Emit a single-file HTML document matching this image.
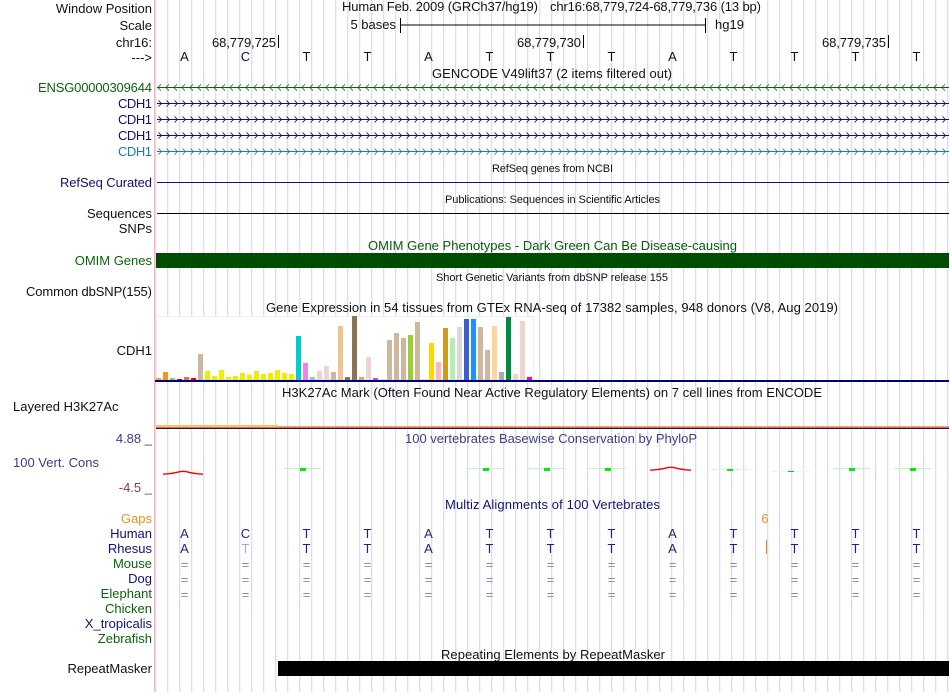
<!DOCTYPE html>
<html><head><meta charset="utf-8"><style>
html,body{margin:0;padding:0;background:#fff;width:950px;height:692px;overflow:hidden}
svg{display:block;font-family:"Liberation Sans",sans-serif;font-size:13px}
.r{text-anchor:end}.m{text-anchor:middle}
.n{fill:#10107a}.g{fill:#0a640a}.k{fill:#111}
.s{font-size:11px}
</style></head><body>
<svg width="950" height="692" viewBox="0 0 950 692" xmlns="http://www.w3.org/2000/svg">
<defs>
<pattern id="gl" x="167" y="0" width="12" height="10" patternUnits="userSpaceOnUse"><rect x="0" width="1" height="10" fill="#dcdcf4"/><rect x="1" width="1" height="10" fill="#f4f4fc"/></pattern>
<pattern id="la" x="157" y="84" width="8" height="7" patternUnits="userSpaceOnUse"><path d="M4 0.300L0.600 3.500L4 6.700" fill="none" stroke="#2a7a2a" stroke-width="0.900"/></pattern>
<pattern id="ra" x="158" y="100" width="8" height="16" patternUnits="userSpaceOnUse"><path d="M0.500 0.500L3.500 3.500L0.500 6.500" fill="none" stroke="#2a2a8a" stroke-width="0.900"/></pattern>
<pattern id="rb" x="158" y="148" width="8" height="7" patternUnits="userSpaceOnUse"><path d="M0.500 0.500L3.500 3.500L0.500 6.500" fill="none" stroke="#3a88c0" stroke-width="0.900"/></pattern>
</defs>
<rect width="950" height="692" fill="#fff"/>
<rect x="155" y="0" width="795" height="692" fill="url(#gl)"/>
<rect x="154" y="0" width="1" height="692" fill="#ffb0b0"/>

<!-- ruler -->
<text x="152" y="13" class="r k">Window Position</text>
<text x="152" y="30" class="r k">Scale</text>
<text x="152" y="47" class="r k">chr16:</text>
<text x="152" y="62" class="r k">---&gt;</text>
<text x="342" y="11" class="k" textLength="196">Human Feb. 2009 (GRCh37/hg19)</text>
<text x="550" y="11" class="k" textLength="211">chr16:68,779,724-68,779,736 (13 bp)</text>
<text x="396" y="29" class="r k">5 bases</text>
<text x="715" y="29" class="k">hg19</text>
<path d="M400.500 18V33M400 25H706M705.500 18V33" stroke="#000" fill="none"/>
<text x="212" y="47" class="k" textLength="64">68,779,725</text><rect x="278" y="35" width="1" height="13" fill="#000"/>
<text x="517" y="47" class="k" textLength="64">68,779,730</text><rect x="583" y="35" width="1" height="13" fill="#000"/>
<text x="822" y="47" class="k" textLength="64">68,779,735</text><rect x="888" y="35" width="1" height="13" fill="#000"/>
<g class="m k">
<text x="184.500" y="61">A</text><text x="245.500" y="61">C</text><text x="306.500" y="61">T</text><text x="367.500" y="61">T</text><text x="428.500" y="61">A</text><text x="489.500" y="61">T</text><text x="550.500" y="61">T</text><text x="611.500" y="61">T</text><text x="672.500" y="61">A</text><text x="733.500" y="61">T</text><text x="794.500" y="61">T</text><text x="855.500" y="61">T</text><text x="916.500" y="61">T</text>
</g>

<!-- genes -->
<text x="432" y="78" class="k" textLength="240">GENCODE V49lift37 (2 items filtered out)</text>
<text x="38" y="92" class="g" textLength="114">ENSG00000309644</text>
<text x="118" y="108" class="n" textLength="34">CDH1</text>
<text x="118" y="124" class="n" textLength="34">CDH1</text>
<text x="118" y="140" class="n" textLength="34">CDH1</text>
<text x="118" y="156" fill="#1f78b4" textLength="34">CDH1</text>
<rect x="157" y="84" width="792" height="7" fill="url(#la)"/>
<rect x="157" y="87" width="792" height="1" fill="#0a640a"/>
<rect x="157" y="100" width="792" height="7" fill="url(#ra)"/>
<rect x="157" y="116" width="792" height="7" fill="url(#ra)"/>
<rect x="157" y="132" width="792" height="7" fill="url(#ra)"/>
<rect x="157" y="148" width="792" height="7" fill="url(#rb)"/>
<rect x="157" y="103" width="792" height="1" fill="#10107a"/>
<rect x="157" y="119" width="792" height="1" fill="#10107a"/>
<rect x="157" y="135" width="792" height="1" fill="#10107a"/>
<rect x="157" y="151" width="792" height="1" fill="#1f78b4"/>

<!-- refseq etc -->
<text x="492" y="172" class="k s" textLength="121">RefSeq genes from NCBI</text>
<text x="60" y="187" class="n" textLength="92">RefSeq Curated</text>
<rect x="157" y="182" width="792" height="1" fill="#10107a"/>
<text x="445" y="203" class="k s" textLength="215">Publications: Sequences in Scientific Articles</text>
<text x="152" y="218" class="r k">Sequences</text>
<rect x="157" y="213" width="792" height="1" fill="#000"/>
<text x="152" y="233" class="r k">SNPs</text>
<text x="368" y="250" fill="#0a5a0a" textLength="369">OMIM Gene Phenotypes - Dark Green Can Be Disease-causing</text>
<text x="152" y="265" class="r g">OMIM Genes</text>
<rect x="156" y="253" width="793" height="15" fill="#004d00"/>
<text x="436" y="281" class="k s" textLength="232">Short Genetic Variants from dbSNP release 155</text>
<text x="26" y="296" class="k" textLength="126">Common dbSNP(155)</text>

<!-- GTEx -->
<text x="266" y="312" class="k" textLength="572">Gene Expression in 54 tissues from GTEx RNA-seq of 17382 samples, 948 donors (V8, Aug 2019)</text>
<text x="152" y="355" class="r k">CDH1</text>
<rect x="156.500" y="316.500" width="377" height="64" fill="#fff" stroke="#eeeeee"/>
<rect x="156" y="379" width="378" height="1" fill="#e4e4e4"/>
<g>
<rect x="156" y="378" width="5" height="2" fill="#ff9955"/>
<rect x="163" y="372" width="5" height="8" fill="#f29a0e"/>
<rect x="170" y="378" width="5" height="2" fill="#8fbc8f"/>
<rect x="177" y="379" width="5" height="1" fill="#8b1a6b"/>
<rect x="184" y="377" width="5" height="3" fill="#ee6a50"/>
<rect x="191" y="378" width="5" height="2" fill="#ff0000"/>
<rect x="198" y="354" width="5" height="26" fill="#cdb79e"/>
<rect x="205" y="371" width="5" height="9" fill="#eeee00"/>
<rect x="212" y="376" width="5" height="4" fill="#eeee00"/>
<rect x="219" y="370" width="5" height="10" fill="#eeee00"/>
<rect x="226" y="377" width="5" height="3" fill="#eeee00"/>
<rect x="233" y="376" width="5" height="4" fill="#eeee00"/>
<rect x="240" y="373" width="5" height="7" fill="#eeee00"/>
<rect x="247" y="375" width="5" height="5" fill="#eeee00"/>
<rect x="254" y="371" width="5" height="9" fill="#eeee00"/>
<rect x="261" y="374" width="5" height="6" fill="#eeee00"/>
<rect x="268" y="373" width="5" height="7" fill="#eeee00"/>
<rect x="275" y="370" width="5" height="10" fill="#eeee00"/>
<rect x="282" y="373" width="5" height="7" fill="#eeee00"/>
<rect x="289" y="374" width="5" height="6" fill="#eeee00"/>
<rect x="296" y="336" width="5" height="44" fill="#00cdcd"/>
<rect x="303" y="363" width="5" height="17" fill="#ee82ee"/>
<rect x="310" y="377" width="5" height="3" fill="#9ac0cd"/>
<rect x="317" y="371" width="5" height="9" fill="#eed5d2"/>
<rect x="324" y="366" width="5" height="14" fill="#eed5d2"/>
<rect x="331" y="372" width="5" height="8" fill="#cdb79e"/>
<rect x="338" y="326" width="5" height="54" fill="#eec591"/>
<rect x="345" y="377" width="5" height="3" fill="#8b7355"/>
<rect x="352" y="316" width="5" height="64" fill="#8b7355"/>
<rect x="359" y="377" width="5" height="3" fill="#cdaa7d"/>
<rect x="366" y="357" width="5" height="23" fill="#eed5d2"/>
<rect x="373" y="378" width="5" height="2" fill="#ba55d3"/>
<rect x="387" y="340" width="5" height="40" fill="#cdb79e"/>
<rect x="394" y="333" width="5" height="47" fill="#cdb79e"/>
<rect x="401" y="338" width="5" height="42" fill="#cdb79e"/>
<rect x="408" y="335" width="5" height="45" fill="#9acd32"/>
<rect x="415" y="322" width="5" height="58" fill="#cdb79e"/>
<rect x="429" y="343" width="5" height="37" fill="#ffd700"/>
<rect x="436" y="362" width="5" height="18" fill="#ffb6c1"/>
<rect x="443" y="328" width="5" height="52" fill="#cd9b1d"/>
<rect x="450" y="338" width="5" height="42" fill="#b4eeb4"/>
<rect x="457" y="327" width="5" height="53" fill="#d9d9d9"/>
<rect x="464" y="319" width="5" height="61" fill="#3a5fcd"/>
<rect x="471" y="319" width="5" height="61" fill="#1e90ff"/>
<rect x="478" y="327" width="5" height="53" fill="#cdb79e"/>
<rect x="485" y="350" width="5" height="30" fill="#cdb79e"/>
<rect x="492" y="326" width="5" height="54" fill="#ffd39b"/>
<rect x="499" y="372" width="5" height="8" fill="#aaaaaa"/>
<rect x="506" y="317" width="5" height="63" fill="#008b45"/>
<rect x="513" y="374" width="5" height="6" fill="#eed5d2"/>
<rect x="520" y="321" width="5" height="59" fill="#eed5d2"/>
<rect x="527" y="377" width="5" height="3" fill="#ee00ee"/>
</g>
<rect x="155" y="380" width="794" height="2" fill="#000080"/>

<!-- H3K27Ac -->
<text x="282" y="397" class="k" textLength="540">H3K27Ac Mark (Often Found Near Active Regulatory Elements) on 7 cell lines from ENCODE</text>
<text x="13" y="411" class="k">Layered H3K27Ac</text>
<rect x="156" y="425" width="122" height="2" fill="#f6c070"/>
<rect x="278" y="426" width="671" height="1" fill="#e8a070"/>
<rect x="156" y="427" width="793" height="1" fill="#d87c50"/>
<rect x="156" y="428" width="793" height="1" fill="#2a1040"/>

<!-- phyloP -->
<text x="405" y="443" fill="#3c3c8c" textLength="292">100 vertebrates Basewise Conservation by PhyloP</text>
<text x="152" y="443" class="r" fill="#3c3c8c">4.88 _</text>
<text x="13" y="467" fill="#3c3c8c">100 Vert. Cons</text>
<text x="152" y="492" class="r" fill="#8c3c3c">-4.5 _</text>
<g fill="none" stroke="#ff0000" stroke-width="1.400">
<path d="M163 474.200Q174 473.500 179 471.800Q183 470.800 187 471.800Q192 473.500 203 474.200"/>
<path d="M650 470.200Q661 469.500 667 467.800Q671 466.800 675 467.800Q680 469.500 691 470.200"/>
</g>
<g>
<rect x="284" y="468" width="37" height="1" fill="#b8f8b8"/><rect x="300" y="468" width="6" height="3" fill="#00ee00"/>
<rect x="467" y="468" width="37" height="1" fill="#c0f8c0"/><rect x="483" y="468" width="6" height="3" fill="#00ee00"/>
<rect x="528" y="468" width="37" height="1" fill="#c0f8c0"/><rect x="544" y="468" width="6" height="3" fill="#00ee00"/>
<rect x="589" y="468" width="37" height="1" fill="#c0f8c0"/><rect x="605" y="468" width="6" height="3" fill="#00ee00"/>
<rect x="711" y="469" width="37" height="1" fill="#d4f8d4"/><rect x="727" y="469" width="6" height="2" fill="#00ee00"/>
<rect x="772" y="471" width="38" height="1" fill="#eaf8ea"/><rect x="788" y="471" width="6" height="1" fill="#00cc00"/>
<rect x="833" y="468" width="37" height="1" fill="#b8f8b8"/><rect x="849" y="468" width="6" height="3" fill="#00ee00"/>
<rect x="894" y="468" width="37" height="1" fill="#b8f8b8"/><rect x="910" y="468" width="6" height="3" fill="#00ee00"/>
</g>

<!-- multiz -->
<text x="445" y="509" class="n" textLength="215">Multiz Alignments of 100 Vertebrates</text>
<text x="152" y="523" class="r" fill="#f09020">Gaps</text>
<text x="765" y="523" class="m" fill="#f09020">6</text>
<rect x="766" y="540" width="1" height="14" fill="#f08000"/>
<text x="152" y="538" class="r n">Human</text>
<text x="152" y="553" class="r n">Rhesus</text>
<text x="152" y="568" class="r g">Mouse</text>
<text x="152" y="583" class="r n">Dog</text>
<text x="152" y="598" class="r g">Elephant</text>
<text x="152" y="613" class="r g">Chicken</text>
<text x="152" y="628" class="r n">X_tropicalis</text>
<text x="152" y="643" class="r g">Zebrafish</text>
<g class="m" fill="#20208a">
<text x="184.500" y="538">A</text><text x="245.500" y="538">C</text><text x="306.500" y="538">T</text><text x="367.500" y="538">T</text><text x="428.500" y="538">A</text><text x="489.500" y="538">T</text><text x="550.500" y="538">T</text><text x="611.500" y="538">T</text><text x="672.500" y="538">A</text><text x="733.500" y="538">T</text><text x="794.500" y="538">T</text><text x="855.500" y="538">T</text><text x="916.500" y="538">T</text>
<text x="184.500" y="553">A</text><text x="245.500" y="553" fill="#a8a8cc">T</text><text x="306.500" y="553">T</text><text x="367.500" y="553">T</text><text x="428.500" y="553">A</text><text x="489.500" y="553">T</text><text x="550.500" y="553">T</text><text x="611.500" y="553">T</text><text x="672.500" y="553">A</text><text x="733.500" y="553">T</text><text x="794.500" y="553">T</text><text x="855.500" y="553">T</text><text x="916.500" y="553">T</text>
</g>
<g class="m" fill="#8888bb">
<text x="184.500" y="569">=</text><text x="245.500" y="569">=</text><text x="306.500" y="569">=</text><text x="367.500" y="569">=</text><text x="428.500" y="569">=</text><text x="489.500" y="569">=</text><text x="550.500" y="569">=</text><text x="611.500" y="569">=</text><text x="672.500" y="569">=</text><text x="733.500" y="569">=</text><text x="794.500" y="569">=</text><text x="855.500" y="569">=</text><text x="916.500" y="569">=</text>
<text x="184.500" y="584">=</text><text x="245.500" y="584">=</text><text x="306.500" y="584">=</text><text x="367.500" y="584">=</text><text x="428.500" y="584">=</text><text x="489.500" y="584">=</text><text x="550.500" y="584">=</text><text x="611.500" y="584">=</text><text x="672.500" y="584">=</text><text x="733.500" y="584">=</text><text x="794.500" y="584">=</text><text x="855.500" y="584">=</text><text x="916.500" y="584">=</text>
<text x="184.500" y="599">=</text><text x="245.500" y="599">=</text><text x="306.500" y="599">=</text><text x="367.500" y="599">=</text><text x="428.500" y="599">=</text><text x="489.500" y="599">=</text><text x="550.500" y="599">=</text><text x="611.500" y="599">=</text><text x="672.500" y="599">=</text><text x="733.500" y="599">=</text><text x="794.500" y="599">=</text><text x="855.500" y="599">=</text><text x="916.500" y="599">=</text>
</g>

<!-- repeatmasker -->
<text x="441" y="659" class="k" textLength="224">Repeating Elements by RepeatMasker</text>
<text x="152" y="673" class="r k">RepeatMasker</text>
<rect x="278" y="661" width="671" height="15" fill="#000"/>
</svg>
</body></html>
